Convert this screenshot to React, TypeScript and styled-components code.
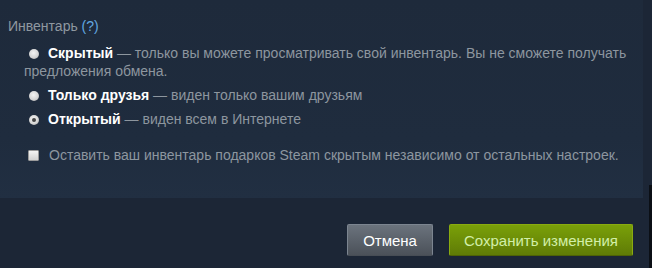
import styled, { createGlobalStyle } from 'styled-components';

const GlobalStyle = createGlobalStyle`
  body {
    margin: 0;
    background: #1c2636;
    font-family: "Liberation Sans", Arial, sans-serif;
  }
`;

interface Option {
  title: string;
  text: string;
  checked?: boolean;
}

const options: Option[] = [
  {
    title: 'Скрытый',
    text: 'только вы можете просматривать свой инвентарь. Вы не сможете получать предложения обмена.',
  },
  { title: 'Только друзья', text: 'виден только вашим друзьям' },
  { title: 'Открытый', text: 'виден всем в Интернете', checked: true },
];

const App: React.FC = () => {
  return (
    <>
      <GlobalStyle />
      <Page>
        <Main>
          <Panel>
            <Heading>
              Инвентарь <Help>(?)</Help>
            </Heading>
            <OptionList>
              {options.map((o) => (
                <OptionRow key={o.title}>
                  <Radio $checked={o.checked} />
                  <b>{o.title}</b> — {o.text}
                </OptionRow>
              ))}
            </OptionList>
            <CheckRow>
              <Checkbox />
              <span>Оставить ваш инвентарь подарков Steam скрытым независимо от остальных настроек.</span>
            </CheckRow>
          </Panel>
          <Footer>
            <Button>Отмена</Button>
            <Button $primary>Сохранить изменения</Button>
          </Footer>
        </Main>
        <Edge />
      </Page>
    </>
  );
};

const Page = styled.div`
  width: 652px;
  height: 268px;
  display: flex;
  overflow: hidden;
`;

const Main = styled.div`
  flex: 1;
  display: flex;
  flex-direction: column;
`;

const Edge = styled.div`
  width: 3px;
  margin-top: 185px;
  background: #0b0f15;
`;

const Panel = styled.div`
  width: 643px;
  height: 198px;
  box-sizing: border-box;
  padding: 17px 0 0 8px;
  background: linear-gradient(180deg, #1e2a3b 0%, #1f2c3e 70%, #212f42 100%);
`;

const Heading = styled.div`
  font-size: 14px;
  line-height: 18px;
  color: #8f98a0;
`;

const Help = styled.span`
  color: #62a8e0;
`;

const OptionList = styled.div`
  display: flex;
  flex-direction: column;
  gap: 6px;
  margin: 9px 0 0 16px;
  padding-right: 14px;
`;

const OptionRow = styled.div`
  font-size: 14px;
  line-height: 18px;
  color: #8d969f;

  b {
    color: #ffffff;
    font-weight: 700;
  }
`;

const Radio = styled.span<{ $checked?: boolean }>`
  display: inline-block;
  position: relative;
  width: 10px;
  height: 10px;
  margin: 0 9px 0 5px;
  vertical-align: -0.5px;
  border-radius: 50%;
  background: radial-gradient(circle at 45% 40%, #f4f4f4 0%, #d6d6d6 55%, #9c9c9c 100%);

  &::after {
    content: '';
    display: ${(p) => (p.$checked ? 'block' : 'none')};
    position: absolute;
    left: 3px;
    top: 3px;
    width: 4px;
    height: 4px;
    border-radius: 50%;
    background: #444;
  }
`;

const CheckRow = styled.div`
  display: flex;
  align-items: center;
  gap: 10px;
  margin: 18px 0 0 20px;
  font-size: 14px;
  line-height: 18px;
  color: #8d969f;
`;

const Checkbox = styled.span`
  width: 9px;
  height: 9px;
  border: 1px solid #9a9a9a;
  border-radius: 1px;
  background: linear-gradient(180deg, #f4f4f4, #d2d2d2);
`;

const Footer = styled.div`
  display: flex;
  justify-content: flex-end;
  gap: 16px;
  padding: 26px 16px 0 0;
`;

const Button = styled.button<{ $primary?: boolean }>`
  height: 32px;
  padding: 0 ${(p) => (p.$primary ? '14px' : '15px')};
  border: 1px solid ${(p) => (p.$primary ? '#8aab10' : '#7c8590')};
  border-bottom-color: ${(p) => (p.$primary ? '#4e6206' : '#474d55')};
  border-radius: 2px;
  font-family: "Liberation Sans", Arial, sans-serif;
  font-size: 15px;
  color: ${(p) => (p.$primary ? '#d2efa9' : '#ffffff')};
  background: ${(p) =>
    p.$primary
      ? 'linear-gradient(180deg, #7aa009 0%, #5f7b06 100%)'
      : 'linear-gradient(180deg, #6b737d 0%, #4b5159 100%)'};
  cursor: pointer;
`;

export default App;
